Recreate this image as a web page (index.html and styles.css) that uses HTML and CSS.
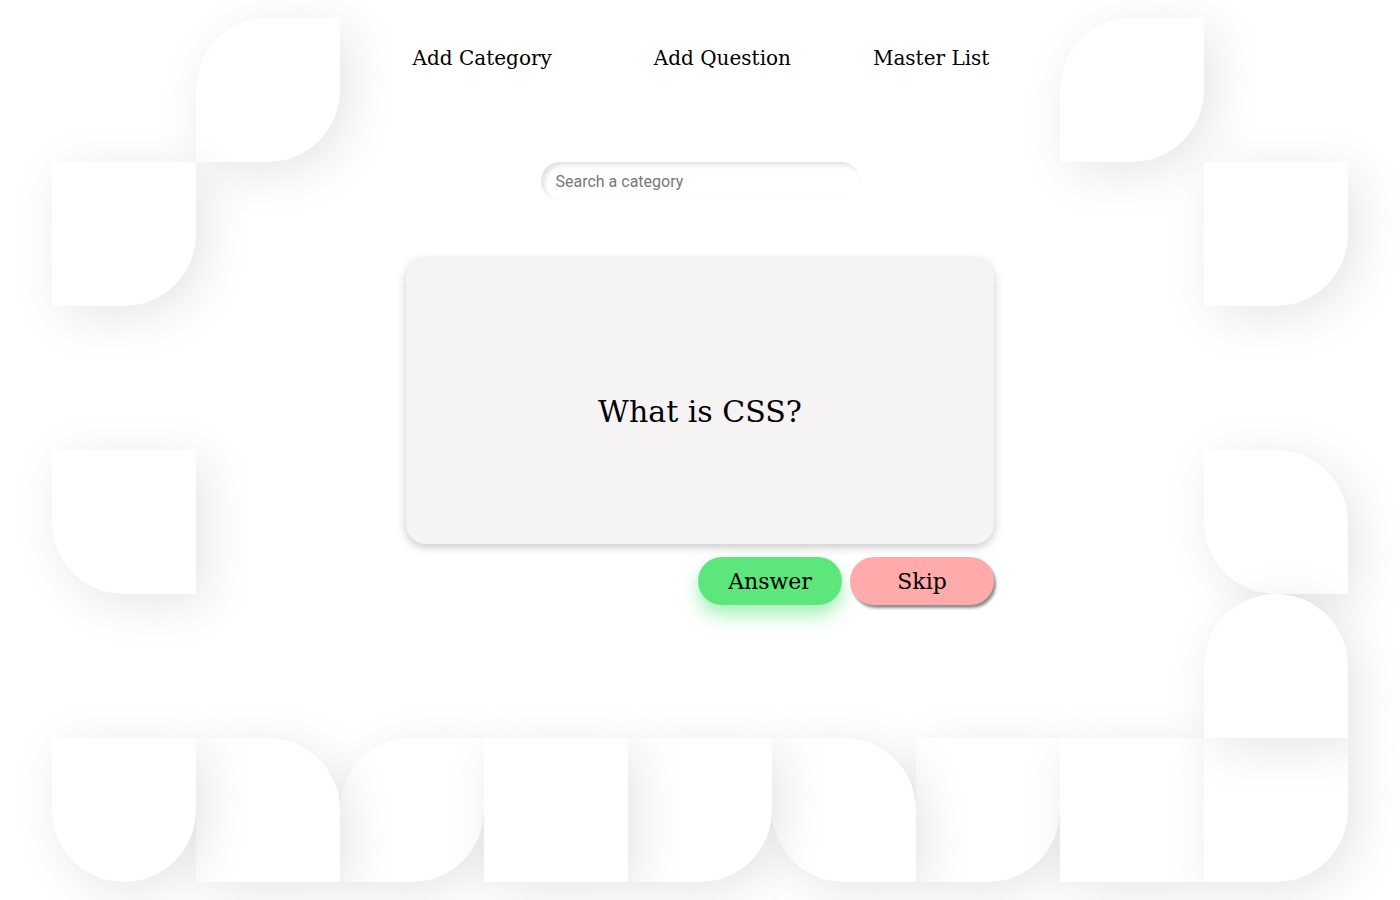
FILE: index.html
```html
<!DOCTYPE html>
<html lang="en">
<head>
<meta charset="utf-8">
<title>Flashcards</title>
<link rel="stylesheet" href="styles.css">
</head>
<body>
<div class="tiles" aria-hidden="true">
  <div class="tile r0 c1 tl-br"></div>
  <div class="tile r0 c7 tl-br"></div>
  <div class="tile r1 c0 br"></div>
  <div class="tile r1 c8 br"></div>
  <div class="tile r3 c0 bl"></div>
  <div class="tile r3 c8 tr-bl"></div>
  <div class="tile r5 c6 br"></div>
  <div class="tile r5 c5 tr-bl"></div>
  <div class="tile r5 c4 br"></div>
  <div class="tile r5 c2 tl-br"></div>
  <div class="tile r5 c1 tr"></div>
  <div class="tile r5 c0 bl-br"></div>
  <div class="tile r5 c3"></div>
  <div class="tile r5 c7"></div>
  <div class="tile r5 c8 br"></div>
  <div class="tile r4 c8 tl-tr"></div>
</div>

<main class="page">
  <nav class="nav">
    <a class="nav-link nav-link-first" href="#">Add Category</a>
    <a class="nav-link" href="#">Add Question</a>
    <a class="nav-link" href="#">Master List</a>
  </nav>

  <input class="search" type="text" placeholder="Search a category">

  <section class="card">
    <p class="question">What is CSS?</p>
  </section>

  <div class="actions">
    <button class="btn btn-answer">Answer</button>
    <button class="btn btn-skip">Skip</button>
  </div>
</main>
</body>
</html>
```

FILE: styles.css
```css
html, body {
  margin: 0;
  padding: 0;
  background: #ffffff;
}

body {
  width: 1400px;
  height: 900px;
  overflow: hidden;
  position: relative;
  font-family: "DejaVu Serif", "Liberation Serif", serif;
  color: #000;
}

/* decorative background layer */
.tiles {
  position: absolute;
  left: 52px;
  top: 18px;
  display: grid;
  grid-template-columns: repeat(9, 144px);
  grid-template-rows: repeat(6, 144px);
  z-index: 0;
}

.tile {
  background: #ffffff;
  box-shadow: 10px 10px 50px rgba(0, 0, 0, 0.1);
}

.r0 { grid-row: 1; }
.r1 { grid-row: 2; }
.r3 { grid-row: 4; }
.r4 { grid-row: 5; }
.r5 { grid-row: 6; }

.c0 { grid-column: 1; }
.c1 { grid-column: 2; }
.c2 { grid-column: 3; }
.c3 { grid-column: 4; }
.c4 { grid-column: 5; }
.c5 { grid-column: 6; }
.c6 { grid-column: 7; }
.c7 { grid-column: 8; }
.c8 { grid-column: 9; }

.tl-br { border-radius: 72px 0 72px 0; }
.tr-bl { border-radius: 0 72px 0 72px; }
.br { border-radius: 0 0 72px 0; }
.bl { border-radius: 0 0 0 72px; }
.tr { border-radius: 0 72px 0 0; }
.tl-tr { border-radius: 72px 72px 0 0; }
.bl-br { border-radius: 0 0 72px 72px; }

/* content */
.page {
  position: relative;
  z-index: 1;
  display: flex;
  flex-direction: column;
  align-items: center;
}

.nav {
  display: flex;
  justify-content: center;
  gap: 82px;
  padding-top: 46px;
  padding-left: 2px;
}

.nav-link {
  font-size: 20px;
  line-height: 24px;
  color: #000;
  text-decoration: none;
}

.nav-link-first {
  margin-right: 20px;
}

.search {
  box-sizing: border-box;
  margin-top: 92px;
  width: 319px;
  height: 38px;
  border: none;
  outline: none;
  border-radius: 19px;
  padding: 0 15px;
  background: #ffffff;
  box-shadow: inset 3px 3px 5px rgba(0, 0, 0, 0.12);
  font-family: Roboto, "Liberation Sans", sans-serif;
  font-size: 16px;
  color: #333;
}

.search::placeholder {
  color: #777;
}

.card {
  box-sizing: border-box;
  margin-top: 58px;
  width: 588px;
  height: 286px;
  border-radius: 20px;
  background: #f5f3f4;
  box-shadow: 0 3px 10px rgba(0, 0, 0, 0.22);
  display: flex;
  align-items: center;
  justify-content: center;
  padding-top: 22px;
}

.question {
  margin: 0;
  font-size: 30px;
  line-height: 36px;
}

.actions {
  width: 588px;
  display: flex;
  justify-content: flex-end;
  gap: 8px;
  margin-top: 13px;
}

.btn {
  width: 144px;
  height: 48px;
  border: none;
  border-radius: 24px;
  font-family: "DejaVu Serif", "Liberation Serif", serif;
  font-size: 22px;
  color: #000;
  padding: 0;
  cursor: pointer;
}

.btn-answer {
  background: #5ce67c;
  box-shadow: 0 10px 18px rgba(92, 230, 124, 0.55);
}

.btn-skip {
  background: #ffabab;
  box-shadow: 2px 3px 3px rgba(0, 0, 0, 0.45);
}
```
